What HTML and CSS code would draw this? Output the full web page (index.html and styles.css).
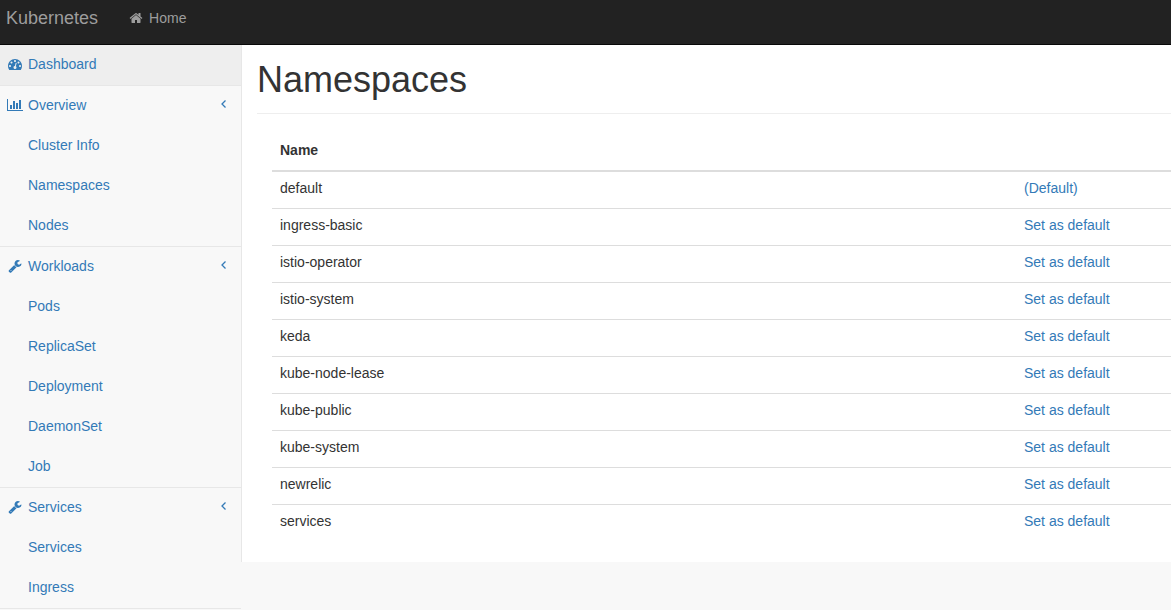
FILE: index.html
```html
<!DOCTYPE html>
<html lang="en">
<head>
<meta charset="utf-8">
<title>Kubernetes - Namespaces</title>
<link rel="stylesheet" href="styles.css">
</head>
<body>
<svg class="sprite" aria-hidden="true">
  <symbol id="home" viewBox="0 0 1792 1792"><path d="M1472 992v480q0 26-19 45t-45 19h-384v-384h-256v384h-384q-26 0-45-19t-19-45v-480q0-1 .5-3t.5-3l575-474 575 474q1 2 1 6zm223-69l-62 74q-8 9-21 11h-3q-13 0-21-7l-692-577-692 577q-12 8-24 7-13-2-21-11l-62-74q-8-10-7-23.5t11-21.5l719-599q32-26 76-26t76 26l244 204v-195q0-14 9-23t23-9h192q14 0 23 9t9 23v408l219 182q10 8 11 21.5t-7 23.5z"/></symbol>
  <symbol id="gauge" viewBox="0 0 1792 1792"><path d="M384 1152q0-53-37.5-90.5t-90.5-37.5-90.5 37.5-37.5 90.5 37.5 90.5 90.5 37.5 90.5-37.5 37.5-90.5zm192-448q0-53-37.5-90.5t-90.5-37.5-90.5 37.5-37.5 90.5 37.5 90.5 90.5 37.5 90.5-37.5 37.5-90.5zm428 481l101-382q6-26-7.5-48.5t-38.5-29.5-48 6.5-30 39.5l-101 382q-60 5-107 43.5t-63 98.5q-20 77 20 146t117 89 146-20 89-117q16-60-6-117t-72-91zm660-33q0-53-37.5-90.5t-90.5-37.5-90.5 37.5-37.5 90.5 37.5 90.5 90.5 37.5 90.5-37.5 37.5-90.5zm-640-640q0-53-37.5-90.5t-90.5-37.5-90.5 37.5-37.5 90.5 37.5 90.5 90.5 37.5 90.5-37.5 37.5-90.5zm448 192q0-53-37.5-90.5t-90.5-37.5-90.5 37.5-37.5 90.5 37.5 90.5 90.5 37.5 90.5-37.5 37.5-90.5zm320 448q0 261-141 483-19 29-54 29h-1402q-35 0-54-29-141-221-141-483 0-182 71-348t191-286 286-191 348-71 348 71 286 191 191 286 71 348z"/></symbol>
  <symbol id="wrench" viewBox="0 0 1792 1792"><path d="M448 1472q0-26-19-45t-45-19-45 19-19 45 19 45 45 19 45-19 19-45zm644-420l-682 682q-37 37-90 37-52 0-91-37l-106-108q-38-36-38-90 0-53 38-91l681-681q39 98 114.5 173.5t173.5 114.5zm634-435q0 39-23 106-47 134-164.5 217.5t-258.5 83.5q-185 0-316.5-131.5t-131.5-316.5 131.5-316.5 316.5-131.5q58 0 121.5 16.5t107.5 46.5q16 11 16 28t-16 28l-293 169v224l193 107q5-3 79-48.5t135.5-81 70.5-35.5q15 0 23.5 10t8.5 25z"/></symbol>
  <symbol id="chart" viewBox="0 0 16 14"><path d="M0 1h1v11h15v1H0zM3 7h2v4H3zM6 3h2v8H6zM9 5h2v6H9zM12 2h2v9h-2z"/></symbol>
  <symbol id="angle" viewBox="0 0 6 10"><path class="stroke" d="M4.5 1.5 1 5 4.5 8.5"/></symbol>
</svg>

<header class="navbar">
  <a class="brand" href="#">Kubernetes</a>
  <a class="nav-link" href="#"><svg class="icon"><use href="#home"/></svg>Home</a>
</header>

<div class="layout">
  <nav class="sidebar" aria-label="Main">
    <ul class="menu">
      <li class="group"><a class="item active" href="#"><span class="icon-box"><svg class="icon"><use href="#gauge"/></svg></span>Dashboard</a></li>
      <li class="group">
        <a class="item" href="#"><span class="icon-box"><svg class="icon icon-chart"><use href="#chart"/></svg></span>Overview<svg class="arrow"><use href="#angle"/></svg></a>
        <ul class="menu">
          <li><a class="item sub" href="#">Cluster Info</a></li>
          <li><a class="item sub" href="#">Namespaces</a></li>
          <li><a class="item sub" href="#">Nodes</a></li>
        </ul>
      </li>
      <li class="group">
        <a class="item" href="#"><span class="icon-box"><svg class="icon"><use href="#wrench"/></svg></span>Workloads<svg class="arrow"><use href="#angle"/></svg></a>
        <ul class="menu">
          <li><a class="item sub" href="#">Pods</a></li>
          <li><a class="item sub" href="#">ReplicaSet</a></li>
          <li><a class="item sub" href="#">Deployment</a></li>
          <li><a class="item sub" href="#">DaemonSet</a></li>
          <li><a class="item sub" href="#">Job</a></li>
        </ul>
      </li>
      <li class="group">
        <a class="item" href="#"><span class="icon-box"><svg class="icon"><use href="#wrench"/></svg></span>Services<svg class="arrow"><use href="#angle"/></svg></a>
        <ul class="menu">
          <li><a class="item sub" href="#">Services</a></li>
          <li><a class="item sub" href="#">Ingress</a></li>
        </ul>
      </li>
    </ul>
  </nav>

  <main class="content">
    <h1 class="page-header">Namespaces</h1>
    <div class="table-wrap">
      <table class="table">
        <thead><tr><th scope="col">Name</th><td class="action"></td></tr></thead>
        <tbody>
          <tr><td>default</td><td class="action"><a href="#">(Default)</a></td></tr>
          <tr><td>ingress-basic</td><td class="action"><a href="#">Set as default</a></td></tr>
          <tr><td>istio-operator</td><td class="action"><a href="#">Set as default</a></td></tr>
          <tr><td>istio-system</td><td class="action"><a href="#">Set as default</a></td></tr>
          <tr><td>keda</td><td class="action"><a href="#">Set as default</a></td></tr>
          <tr><td>kube-node-lease</td><td class="action"><a href="#">Set as default</a></td></tr>
          <tr><td>kube-public</td><td class="action"><a href="#">Set as default</a></td></tr>
          <tr><td>kube-system</td><td class="action"><a href="#">Set as default</a></td></tr>
          <tr><td>newrelic</td><td class="action"><a href="#">Set as default</a></td></tr>
          <tr><td>services</td><td class="action"><a href="#">Set as default</a></td></tr>
        </tbody>
      </table>
    </div>
  </main>
</div>
</body>
</html>
```
FILE: styles.css
```css
* { box-sizing: border-box; }

body {
  margin: 0;
  background: #f8f8f8;
  color: #333;
  font: 14px/20px "Liberation Sans", Arial, sans-serif;
}

a { color: #337ab7; text-decoration: none; }
a:hover { text-decoration: underline; }

.sprite { position: absolute; width: 0; height: 0; }
.stroke { fill: none; stroke: currentColor; stroke-width: 1.3; }

.icon { width: 14px; height: 14px; fill: currentColor; }
.icon-chart { width: 16px; }

.navbar {
  display: flex;
  align-items: flex-start;
  gap: 31px;
  padding: 8px 6px 16px;
  background: #222;
  border-bottom: 1px solid #080808;
}
.brand { color: #9d9d9d; font-size: 18px; }
.nav-link {
  display: flex;
  align-items: center;
  gap: 6px;
  color: #9d9d9d;
}

.layout { display: flex; align-items: flex-start; }

.sidebar { flex: 0 0 241px; }
.menu { margin: 0; padding: 0; list-style: none; }
.group { border-bottom: 1px solid #e7e7e7; }
.item {
  display: flex;
  align-items: center;
  padding: 9px 14px 11px 6px;
}
.item.active { background: #eee; }
.item.sub { padding-left: 28px; }
.icon-box {
  display: flex;
  justify-content: center;
  width: 18px;
  margin-right: 4px;
}
.arrow { width: 6px; height: 10px; margin: 0 0 3px auto; }

.content {
  flex: 1;
  min-width: 0;
  padding-left: 15px;
  background: #fff;
  border-left: 1px solid #e7e7e7;
}
.page-header {
  margin: 0 0 20px;
  padding: 15px 0 13px;
  border-bottom: 1px solid #eee;
  font-size: 36px;
  font-weight: 500;
  line-height: 40px;
}
.table-wrap { padding: 0 0 21px 15px; }
.table { width: 100%; border-spacing: 0; }
.table th, .table td { padding: 6px 8px 10px; text-align: left; }
.table thead th, .table thead td { border-bottom: 2px solid #ddd; }
.table tbody tr + tr td { border-top: 1px solid #ddd; }
.table .action { width: 155px; }
```
